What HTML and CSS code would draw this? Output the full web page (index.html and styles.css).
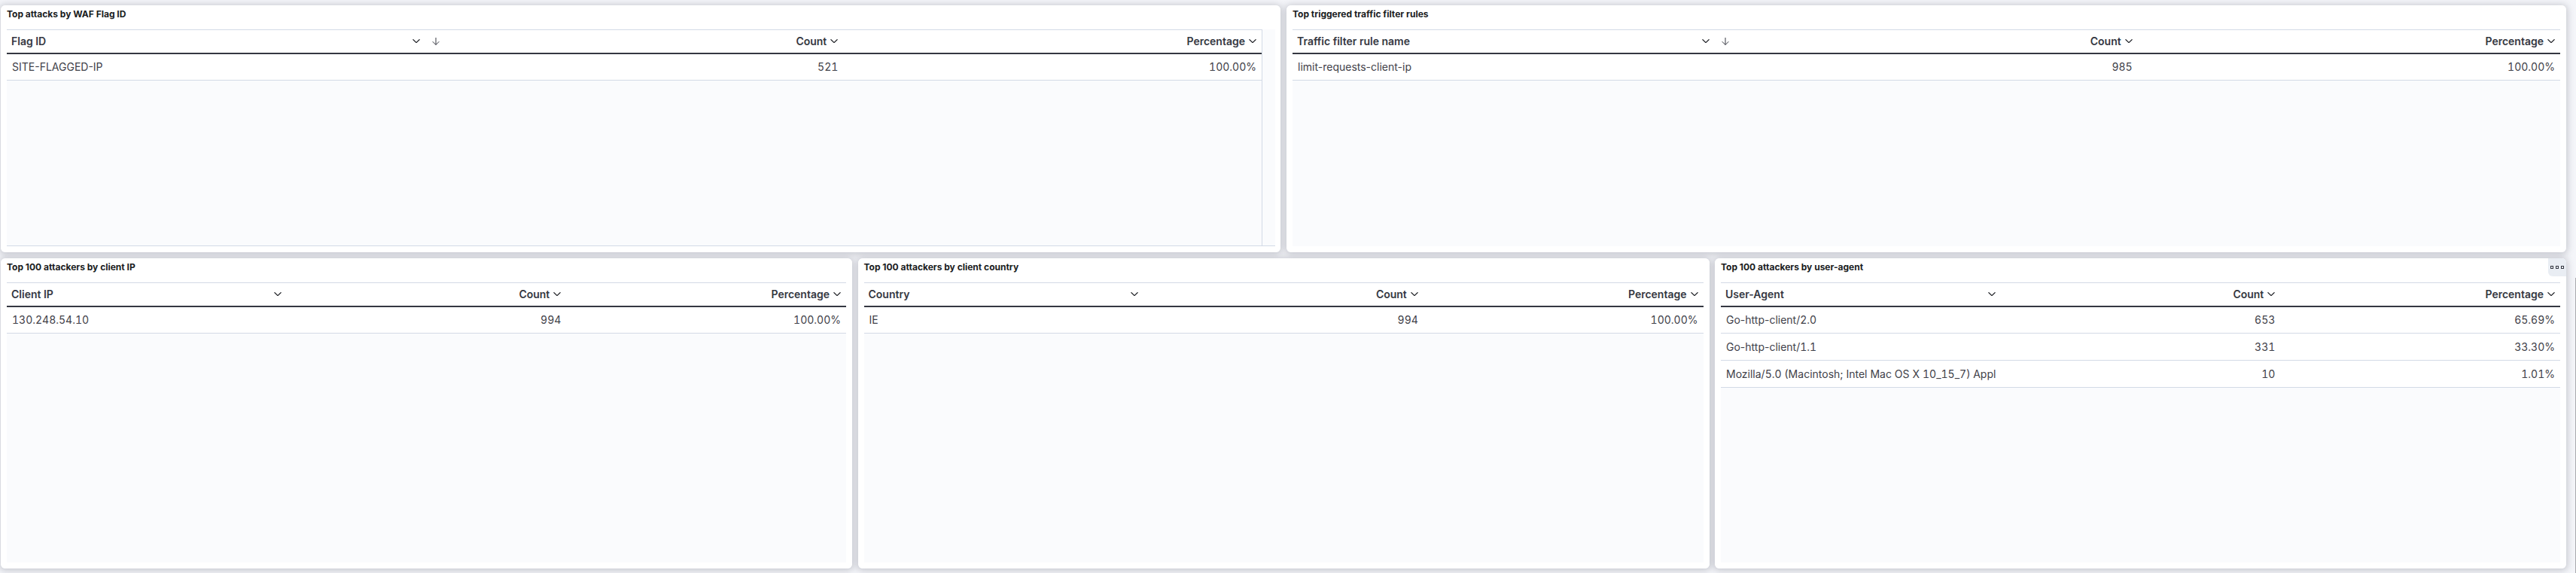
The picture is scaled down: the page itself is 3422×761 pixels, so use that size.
FILE: index.html
```html
<!DOCTYPE html>
<html lang="en">
<head>
  <meta charset="UTF-8">
  <title>WAF dashboard</title>
  <link rel="stylesheet" href="styles.css">
</head>
<body>

  <svg class="icon-defs" width="0" height="0">
    <symbol id="chevron" viewBox="0 0 10 5">
      <path d="M0.5 0.3 L5 4.6 L9.5 0.3" fill="none" stroke="currentColor" stroke-width="1.2"/>
    </symbol>
    <symbol id="arrow" viewBox="0 0 10 10">
      <path d="M5 0 V9.5 M0.7 5.2 L5 9.5 L9.3 5.2" fill="none" stroke="currentColor" stroke-width="1"/>
    </symbol>
  </svg>

  <div class="row row-top">

    <section class="panel">
      <h2 class="panel-title">Top attacks by WAF Flag ID</h2>
      <div class="grid grid-scroll">
        <div class="grid-inner">
          <table>
            <thead>
              <tr>
                <th><div class="head"><span class="head-label">Flag ID</span><svg class="chevron"><use href="#chevron"/></svg></div></th>
                <th><div class="head head-num"><svg class="sort-arrow"><use href="#arrow"/></svg><span class="head-label">Count</span><svg class="chevron"><use href="#chevron"/></svg></div></th>
                <th><div class="head head-num"><span class="head-label">Percentage</span><svg class="chevron"><use href="#chevron"/></svg></div></th>
              </tr>
            </thead>
            <tbody>
              <tr><td><div class="cell">SITE-FLAGGED-IP</div></td><td class="num">521</td><td class="num">100.00%</td></tr>
            </tbody>
          </table>
        </div>
      </div>
    </section>

    <section class="panel">
      <h2 class="panel-title">Top triggered traffic filter rules</h2>
      <div class="grid">
        <table>
          <thead>
            <tr>
              <th><div class="head"><span class="head-label">Traffic filter rule name</span><svg class="chevron"><use href="#chevron"/></svg></div></th>
              <th><div class="head head-num"><svg class="sort-arrow"><use href="#arrow"/></svg><span class="head-label">Count</span><svg class="chevron"><use href="#chevron"/></svg></div></th>
              <th><div class="head head-num"><span class="head-label">Percentage</span><svg class="chevron"><use href="#chevron"/></svg></div></th>
            </tr>
          </thead>
          <tbody>
            <tr><td><div class="cell">limit-requests-client-ip</div></td><td class="num">985</td><td class="num">100.00%</td></tr>
          </tbody>
        </table>
      </div>
    </section>

  </div>

  <div class="row row-bottom">

    <section class="panel">
      <h2 class="panel-title">Top 100 attackers by client IP</h2>
      <div class="grid">
        <table>
          <thead>
            <tr>
              <th><div class="head"><span class="head-label">Client IP</span><svg class="chevron"><use href="#chevron"/></svg></div></th>
              <th><div class="head head-num"><span class="head-label">Count</span><svg class="chevron"><use href="#chevron"/></svg></div></th>
              <th><div class="head head-num"><span class="head-label">Percentage</span><svg class="chevron"><use href="#chevron"/></svg></div></th>
            </tr>
          </thead>
          <tbody>
            <tr><td><div class="cell ver">130.248.54.10</div></td><td class="num">994</td><td class="num">100.00%</td></tr>
          </tbody>
        </table>
      </div>
    </section>

    <section class="panel">
      <h2 class="panel-title">Top 100 attackers by client country</h2>
      <div class="grid">
        <table>
          <thead>
            <tr>
              <th><div class="head"><span class="head-label">Country</span><svg class="chevron"><use href="#chevron"/></svg></div></th>
              <th><div class="head head-num"><span class="head-label">Count</span><svg class="chevron"><use href="#chevron"/></svg></div></th>
              <th><div class="head head-num"><span class="head-label">Percentage</span><svg class="chevron"><use href="#chevron"/></svg></div></th>
            </tr>
          </thead>
          <tbody>
            <tr><td><div class="cell">IE</div></td><td class="num">994</td><td class="num">100.00%</td></tr>
          </tbody>
        </table>
      </div>
    </section>

    <section class="panel">
      <h2 class="panel-title">Top 100 attackers by user-agent</h2>
      <button class="panel-menu" aria-label="Panel options">
        <span class="dot"></span><span class="dot"></span><span class="dot"></span>
      </button>
      <div class="grid">
        <table>
          <thead>
            <tr>
              <th><div class="head"><span class="head-label">User-Agent</span><svg class="chevron"><use href="#chevron"/></svg></div></th>
              <th><div class="head head-num"><span class="head-label">Count</span><svg class="chevron"><use href="#chevron"/></svg></div></th>
              <th><div class="head head-num"><span class="head-label">Percentage</span><svg class="chevron"><use href="#chevron"/></svg></div></th>
            </tr>
          </thead>
          <tbody>
            <tr><td><div class="cell">Go-http-client/<span class="ver">2.0</span></div></td><td class="num">653</td><td class="num">65.69%</td></tr>
            <tr><td><div class="cell">Go-http-client/<span class="ver">1.1</span></div></td><td class="num">331</td><td class="num">33.30%</td></tr>
            <tr><td><div class="cell">Mozilla/<span class="ver">5.0</span> (Macintosh; Intel Mac OS X <span class="ver">10</span>_<span class="ver">15</span>_<span class="ver">7</span>) AppleWebKit/537.36 (KHTML, like Gecko)</div></td><td class="num">10</td><td class="num">1.01%</td></tr>
          </tbody>
        </table>
      </div>
    </section>

  </div>

  <div class="page-scrollbar"></div>

</body>
</html>
```

FILE: styles.css
```css
* {
  box-sizing: border-box;
}

html, body {
  height: 100%;
}

body {
  margin: 0;
  padding: 7px 13px 0 1px;
  overflow: hidden;
  background: #f4f5f9;
  color: #3f4149;
  font-family: Inter, "Noto Sans", sans-serif;
  font-size: 14px;
}

.icon-defs {
  position: absolute;
}

.row {
  display: grid;
}

.row-top {
  height: 328px;
  grid-template-columns: 1700px 1700px;
  column-gap: 8px;
  margin-bottom: 8px;
}

.row-bottom {
  height: 412px;
  grid-template-columns: 1131px 1131px 1131px;
  column-gap: 7.5px;
}

.panel {
  position: relative;
  display: flex;
  flex-direction: column;
  padding: 0 8px 8px;
  background: #fff;
  border-radius: 6px;
}

.panel::before {
  content: "";
  position: absolute;
  inset: 0;
  z-index: -1;
  border-radius: 6px;
  box-shadow: 0 1px 9px 2px rgba(70, 75, 90, 0.25);
}

.panel-title {
  height: 32px;
  margin: 0;
  padding-top: 5px;
  color: #1a1c21;
  font-size: 12px;
  font-weight: 700;
  line-height: 14px;
}

.panel-menu {
  position: absolute;
  top: 0;
  right: 0;
  display: flex;
  align-items: center;
  justify-content: center;
  gap: 3px;
  width: 24px;
  height: 24px;
  padding: 0;
  background: #e9edf3;
  border: none;
  border-radius: 0 6px 0 6px;
}

.dot {
  width: 4px;
  height: 4px;
  border: 1px solid #343741;
}

.grid {
  flex: 1;
  background: #fafbfd;
}

.grid-scroll {
  padding-right: 17px;
  border-bottom: 1px solid #d3dae6;
  margin-right: -1px;
}

.grid-inner {
  height: 100%;
  border-right: 1px solid #d3dae6;
}

table {
  width: 100%;
  table-layout: fixed;
  border-collapse: collapse;
  background: #fff;
}

th {
  height: 31px;
  padding: 0 7px 0 6px;
  border-top: 1px solid #d3dae6;
  border-bottom: 2px solid #343741;
  color: #343741;
  font-size: 14px;
  font-weight: 600;
}

.head {
  display: flex;
  align-items: center;
}

.head-label {
  margin-right: auto;
}

.head-num .head-label {
  margin-right: 5px;
}

.head-num {
  justify-content: flex-end;
}

.chevron {
  flex: none;
  width: 10px;
  height: 5px;
  color: #1a1c21;
}

.sort-arrow {
  flex: none;
  width: 10px;
  height: 10px;
  margin-right: auto;
  margin-left: 3px;
}

td {
  height: 36px;
  padding: 0 7px;
  border-bottom: 1px solid #d3dae6;
}

.cell {
  overflow: hidden;
  white-space: nowrap;
}

.num,
.ver {
  font-variant-numeric: tabular-nums;
}

.num {
  text-align: right;
}

.page-scrollbar {
  position: absolute;
  top: 369px;
  right: 0;
  bottom: 0;
  width: 1px;
  background: #a8a9ad;
}
```
